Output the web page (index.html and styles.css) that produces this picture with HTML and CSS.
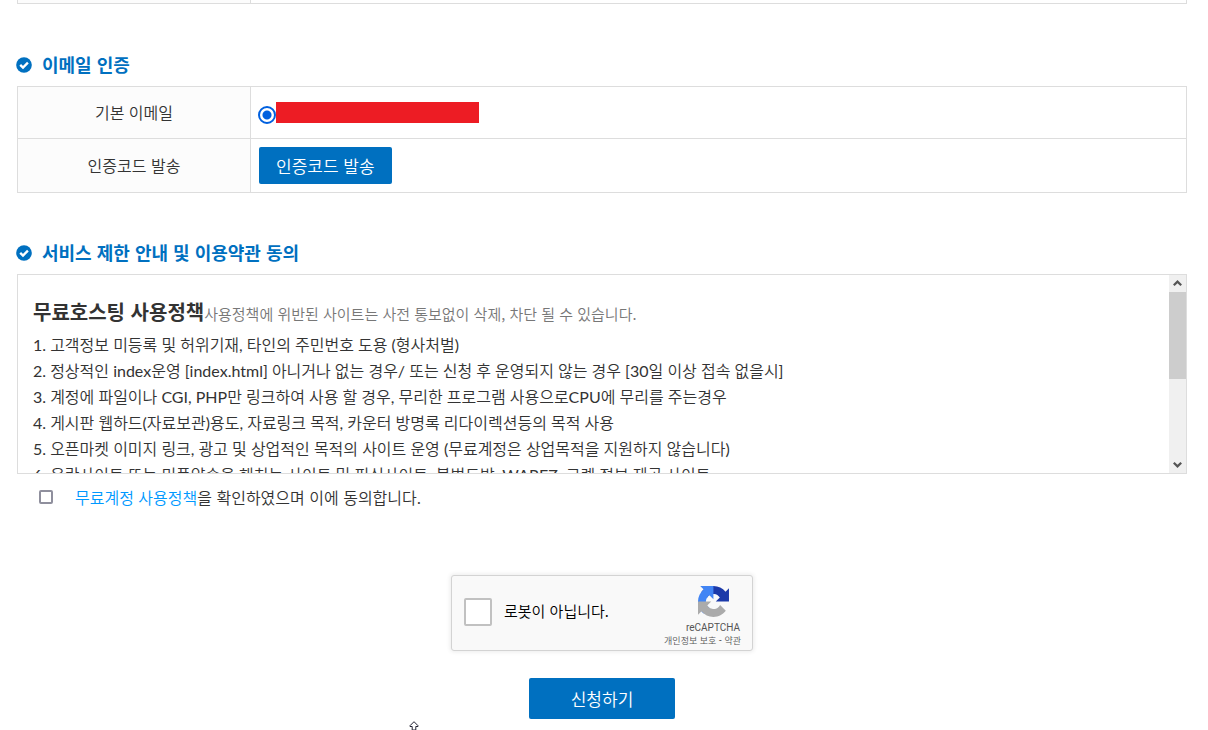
FILE: index.html
```html
<!DOCTYPE html>
<html lang="ko">
<head>
<meta charset="utf-8">
<title>이메일 인증</title>
<link rel="stylesheet" href="styles.css">
</head>
<body>
<main class="page">
  <div class="prev-section"><div class="prev-label"></div></div>
  <form class="form">
    <section class="section">
      <h2 class="section-title">
        <svg class="check-icon" viewBox="0 0 16 16" aria-hidden="true"><circle cx="8" cy="8" r="7.8"/><path d="M4.2 7.8 7 10.5 11.9 5.7"/></svg>
        이메일 인증
      </h2>
      <table class="info">
        <tr>
          <th scope="row">기본 이메일</th>
          <td><div class="email"><input class="radio" type="radio" name="email" checked aria-label="기본 이메일"><span class="redacted"></span></div></td>
        </tr>
        <tr>
          <th scope="row">인증코드 발송</th>
          <td><button class="btn btn-send" type="button">인증코드 발송</button></td>
        </tr>
      </table>
    </section>
    <section class="section">
      <h2 class="section-title">
        <svg class="check-icon" viewBox="0 0 16 16" aria-hidden="true"><circle cx="8" cy="8" r="7.8"/><path d="M4.2 7.8 7 10.5 11.9 5.7"/></svg>
        서비스 제한 안내 및 이용약관 동의
      </h2>
      <div class="policy">
        <div class="policy-text" tabindex="0">
          <h3 class="policy-title">무료호스팅 사용정책<small class="policy-note">사용정책에 위반된 사이트는 사전 통보없이 삭제, 차단 될 수 있습니다.</small></h3>
          <ul class="rules">
            <li>1. 고객정보 미등록 및 허위기재, 타인의 주민번호 도용 (형사처벌)</li>
            <li>2. 정상적인 index운영 [index.html] 아니거나 없는 경우/ 또는 신청 후 운영되지 않는 경우 [30일 이상 접속 없을시]</li>
            <li>3. 계정에 파일이나 CGI, PHP만 링크하여 사용 할 경우, 무리한 프로그램 사용으로CPU에 무리를 주는경우</li>
            <li>4. 게시판 웹하드(자료보관)용도, 자료링크 목적, 카운터 방명록 리다이렉션등의 목적 사용</li>
            <li>5. 오픈마켓 이미지 링크, 광고 및 상업적인 목적의 사이트 운영 (무료계정은 상업목적을 지원하지 않습니다)</li>
            <li>6. 음란사이트 또는 미풍양속을 해치는 사이트 및 피싱사이트, 불법드방, WAREZ, 크렉 정보 제공 사이트</li>
          </ul>
        </div>
        <div class="scrollbar" aria-hidden="true">
          <svg class="arrow" viewBox="0 0 17 17"><path d="M4.8 10.3 8.5 6.6 12.2 10.3"/></svg>
          <div class="track"><div class="thumb"></div></div>
          <svg class="arrow" viewBox="0 0 17 17"><path d="M4.8 6.7 8.5 10.4 12.2 6.7"/></svg>
        </div>
      </div>
      <div class="agree">
        <input class="checkbox" type="checkbox" id="agree">
        <label for="agree"><a class="link" href="#">무료계정 사용정책</a>을 확인하였으며 이에 동의합니다.</label>
      </div>
    </section>
    <div class="captcha">
      <input class="captcha-box" type="checkbox" id="robot">
      <label class="captcha-label" for="robot">로봇이 아닙니다.</label>
      <div class="captcha-brand">
        <svg class="captcha-logo" viewBox="0 0 64 64" aria-hidden="true">
          <path fill="#1c3aa9" d="M64 31.955l-.033-1.37V4.687l-7.16 7.16C50.948 4.674 42.033.093 32.05.093c-10.4 0-19.622 4.96-25.458 12.64l11.736 11.86a15.55 15.55 0 0 1 4.754-5.334c2.05-1.6 4.952-2.906 8.968-2.906.485 0 .86.057 1.135.163 4.976.393 9.288 3.14 11.828 7.124l-8.307 8.307L64 31.953"/>
          <path fill="#4285f4" d="M31.862.094l-1.37.033H4.594l7.16 7.16C4.58 13.147 0 22.06 0 32.046c0 10.4 4.96 19.622 12.64 25.458L24.5 45.768a15.55 15.55 0 0 1-5.334-4.754c-1.6-2.05-2.906-4.952-2.906-8.968 0-.485.057-.86.163-1.135.393-4.976 3.14-9.288 7.124-11.828l8.307 8.307L31.86.095"/>
          <path fill="#ababab" d="M.001 32.045l.033 1.37v25.898l7.16-7.16c5.86 7.173 14.774 11.754 24.76 11.754 10.4 0 19.622-4.96 25.458-12.64l-11.736-11.86a15.55 15.55 0 0 1-4.754 5.334c-2.05 1.6-4.952 2.906-8.968 2.906-.485 0-.86-.057-1.135-.163-4.976-.393-9.288-3.14-11.828-7.124l8.307-8.307c-10.522.04-22.4.066-27.295-.005"/>
        </svg>
        <span class="captcha-name">reCAPTCHA</span>
        <span class="captcha-links"><a href="#">개인정보 보호</a> - <a href="#">약관</a></span>
      </div>
    </div>
    <button class="btn btn-submit" type="submit">신청하기</button>
  </form>
  <svg class="pointer" viewBox="0 0 10 10" aria-hidden="true"><path d="M5 .7 9 4.7V5.5H6.8V9H3.2V5.5H1V4.7z"/></svg>
</main>
</body>
</html>
```
FILE: styles.css
```css
* { box-sizing: border-box; }
html { overflow: hidden; }
body {
  margin: 0;
  background: #fff;
  color: #333;
  font: 350 16px/26px "Noto Sans CJK KR", "Noto Sans", sans-serif;
}
.page { padding: 0 21px 0 17px; }
.prev-section {
  display: grid;
  grid-template-columns: 233px 1fr;
  height: 4px;
  border: solid #ddd;
  border-width: 0 1px 1px;
}
.prev-label { background: #fcfcfc; border-right: 1px solid #ddd; }
.form { display: flex; flex-direction: column; padding-top: 1px; }
.section { padding-top: 46px; }
.section-title {
  display: flex;
  align-items: center;
  gap: 10px;
  margin: 0 0 9px -1px;
  color: #0070c0;
  font-size: 18px;
  line-height: 26px;
  font-weight: 700;
}
.check-icon { width: 16px; height: 16px; fill: #0070c0; margin-top: 2px; }
.check-icon path { fill: none; stroke: #fff; stroke-width: 2.4; }

.info { width: 100%; border-collapse: collapse; table-layout: fixed; }
.info th, .info td { border: 1px solid #ddd; height: 52px; padding: 8px; }
.info th { width: 233px; background: #fcfcfc; font-weight: 350; line-height: 24px; padding-bottom: 10px; }
.email { display: flex; align-items: center; }
.radio {
  appearance: none;
  width: 18px;
  height: 18px;
  margin: 4px 0 0 -1px;
  border: 2px solid #0060df;
  border-radius: 50%;
  background: radial-gradient(circle, #0060df 4px, #fff 5px);
}
.redacted { width: 203px; height: 21px; background: #ed1c24; }
.btn {
  display: block;
  border: 0;
  border-radius: 2px;
  background: #0070c0;
  color: #fff;
  font-family: inherit;
  font-size: 17px;
  line-height: 25px;
  font-weight: 350;
}
.btn-send { padding: 6px 17px; }
.btn-submit { align-self: center; width: 146px; padding: 8px; margin-top: 27px; }

.policy { display: flex; height: 200px; border: 1px solid #ddd; }
.policy-text { flex: 1; padding: 24px 15px 0; overflow-y: auto; scrollbar-width: none; }
.policy-title { margin: 0 0 5px; font-size: 20px; line-height: 26px; font-weight: 700; }
.policy-note { color: #777; font-size: 15px; font-weight: 350; }
.rules {
  margin: 0;
  padding: 0;
  list-style: none;
  font-family: Lato, "Noto Sans CJK KR DemiLight", "Noto Sans CJK KR", sans-serif;
  font-weight: 400;
}
.scrollbar { display: flex; flex-direction: column; width: 17px; background: #f0f0f0; }
.arrow { width: 17px; height: 17px; fill: none; stroke: #555; stroke-width: 2.2; }
.track { flex: 1; }
.thumb { height: 87px; background: #cdcdcd; }

.agree { display: flex; align-items: center; gap: 22px; padding: 10px 0 0 22px; }
.checkbox {
  appearance: none;
  width: 14px;
  height: 14px;
  margin: 0;
  border: 2px solid #8f8f9d;
  border-radius: 2px;
}
.link { color: #0099ff; text-decoration: none; }

.captcha {
  align-self: center;
  display: flex;
  align-items: center;
  width: 302px;
  height: 76px;
  margin-top: 65px;
  padding: 0 11px 0 12px;
  border: 1px solid #d3d3d3;
  border-radius: 3px;
  background: #f9f9f9;
  box-shadow: 0 0 4px 1px rgba(0, 0, 0, .08);
}
.captcha-box {
  appearance: none;
  width: 28px;
  height: 28px;
  margin: 0 12px 2px 0;
  border: 2px solid #c1c1c1;
  border-radius: 2px;
  background: #fff;
}
.captcha-label { flex: 1; padding-bottom: 4px; color: #000; font-size: 15px; }
.captcha-brand { display: flex; flex-direction: column; align-items: flex-end; padding-top: 7px; }
.captcha-logo { width: 31px; height: 31px; margin: 0 12px 4px 0; }
.captcha-name { color: #555; font: 10px/13px Roboto, sans-serif; margin-right: 1px; }
.captcha-links { color: #000; font-size: 9px; line-height: 13px; }
.captcha-links a { color: #555; text-decoration: none; }
.pointer {
  position: absolute;
  left: 409px;
  top: 721px;
  width: 10px;
  height: 10px;
  fill: #fff;
  stroke: #223;
}
```
